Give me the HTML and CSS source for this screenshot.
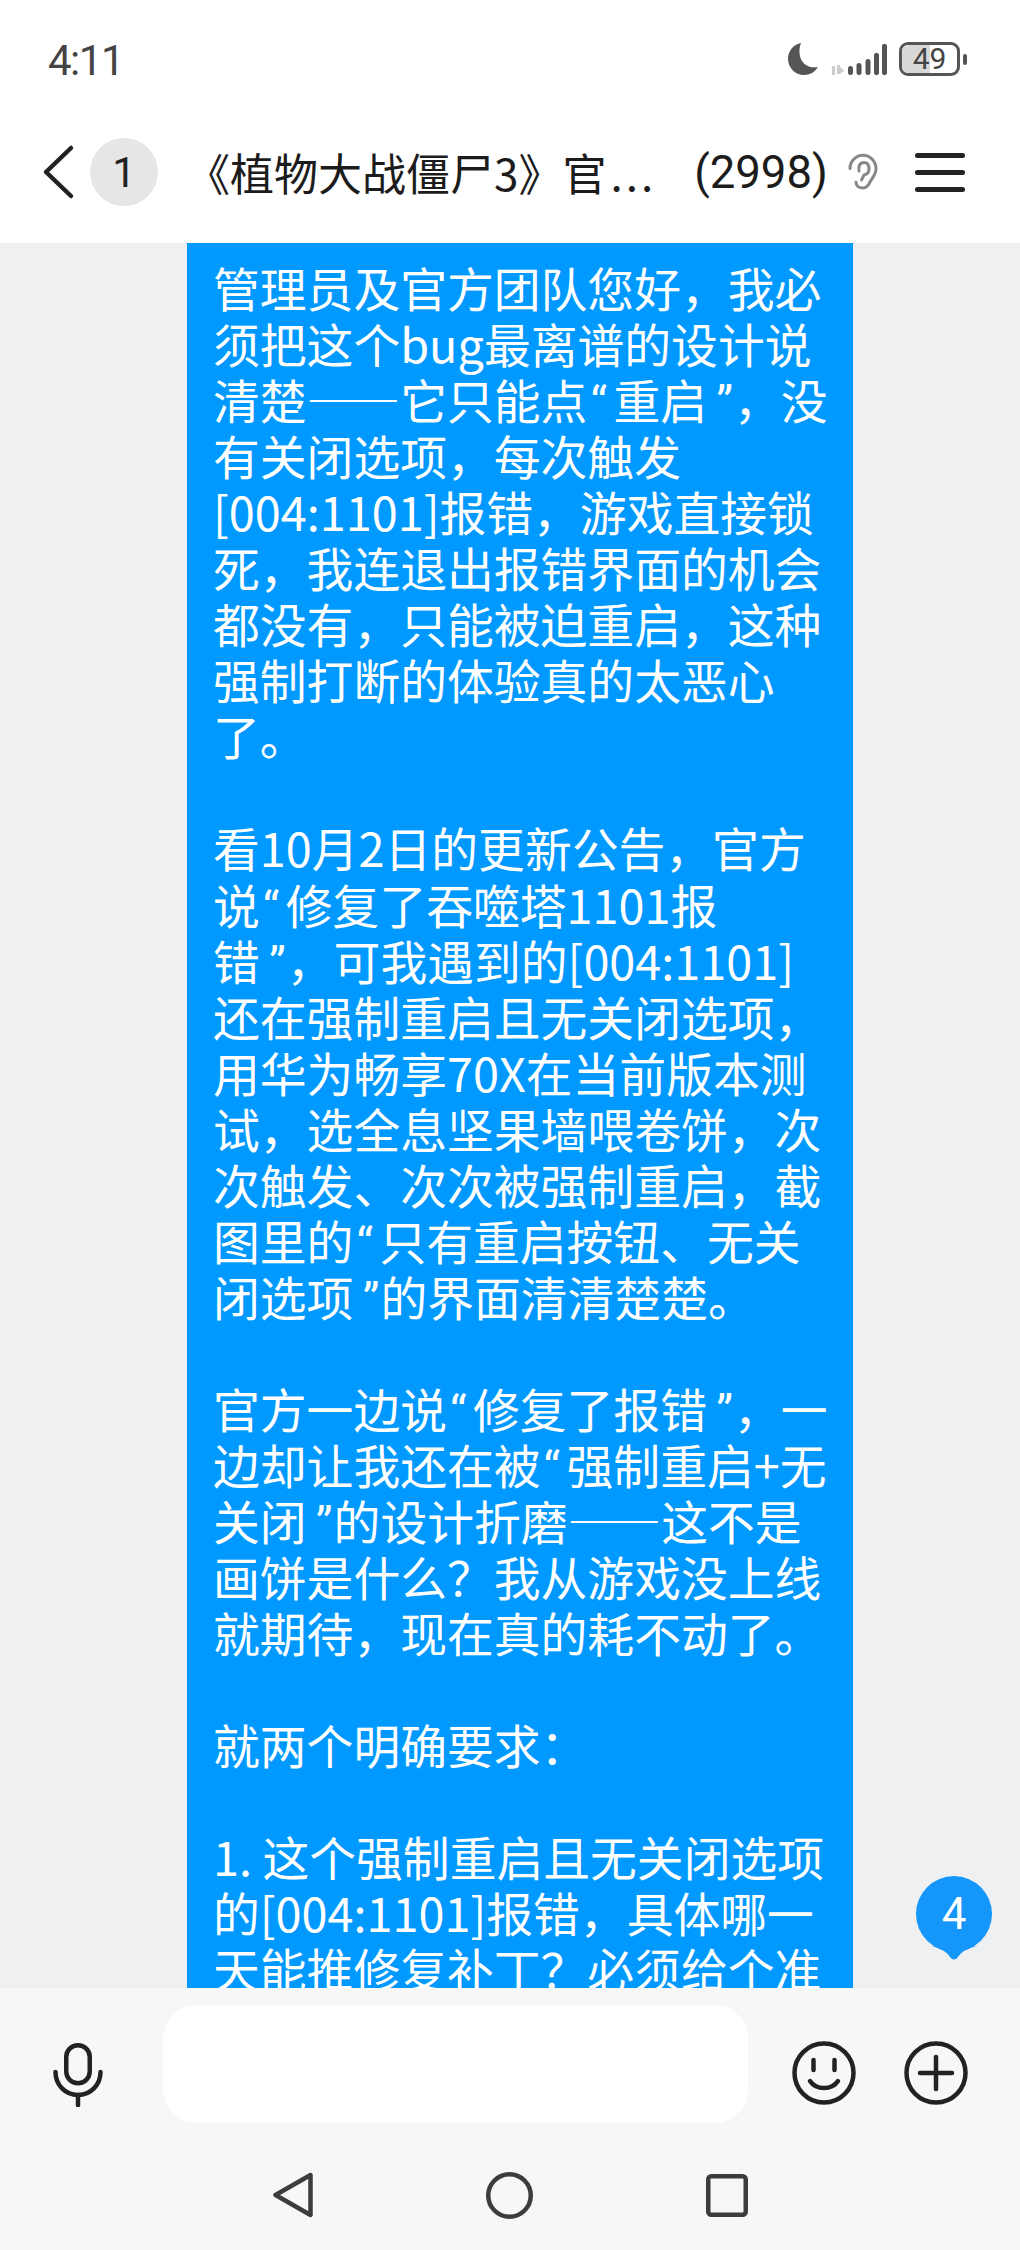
FILE: index.html
```html
<!DOCTYPE html>
<html lang="zh-CN">
<head>
<meta charset="utf-8">
<title>Chat</title>
<link rel="stylesheet" href="styles.css">
</head>
<body>
<div class="phone">
  <div class="status">
    <span class="time">4:11</span>
    <div class="status-icons">
      <svg class="moon" width="30" height="32" viewBox="0 0 30 32"><path d="M13 0C5.500 1.500 0 8 0 15.500 0 24.500 7 32 16 32c6 0 11-3 14-8-9 1.500-15-2.500-17.500-9C11 10 11 4.500 13 0z" fill="#555"/></svg>
      <svg class="signal" width="56" height="31" viewBox="0 0 56 31">
        <g fill="#ccc"><rect x="1" y="22" width="3" height="9"/><path d="M0 25l2.500-3 2.500 3z"/><rect x="6" y="21" width="3" height="9"/><path d="M9 23l4 3.500-4 3.500z"/></g>
        <g fill="#555"><rect x="17" y="22" width="5" height="9" rx="2.500"/><rect x="25.500" y="19" width="5" height="12" rx="2.500"/><rect x="34.500" y="15" width="5" height="16" rx="2.500"/><rect x="43" y="9" width="5" height="22" rx="2"/><rect x="51" y="0" width="5" height="31" rx="2"/></g>
      </svg>
      <div class="battery"><span class="battery-fill"></span><span class="battery-num">49</span></div>
      <span class="battery-tip"></span>
    </div>
  </div>
  <header class="topbar">
    <svg class="back" width="34" height="56" viewBox="0 0 34 56"><path d="M30 4 5 28l25 24" fill="none" stroke="#222" stroke-width="4.500" stroke-linecap="round" stroke-linejoin="round"/></svg>
    <span class="unread">1</span>
    <span class="title">《植物大战僵尸3》官<span class="dots">...</span></span>
    <span class="count">(2998)</span>
    <svg class="ear" width="30" height="38" viewBox="0 0 30 38"><g fill="none" stroke="#888" stroke-width="3" stroke-linecap="round"><path d="M2 15.500C2 8 8 2.300 15 2.300S28 8 28 16c0 5-3 8-5.500 12-1.500 3-3 7-7.500 7-4 0-7-2-7-6"/><path d="M11 18c-1-5 1-8.500 5-8.500s5 3 5 6.500-2 5.500-5 6l-2.500 5"/></g></svg>
    <span class="menu"><i></i><i></i><i></i></span>
  </header>
  <main class="messages">
    <div class="bubble">管理员及官方团队您好，我必<br>须把这个bug最离谱的设计说<br>清楚——它只能点<span class="ql">“</span>重启<span class="qr">”</span>，没<br>有关闭选项，每次触发<br>[004:1101]报错，游戏直接锁<br>死，我连退出报错界面的机会<br>都没有，只能被迫重启，这种<br>强制打断的体验真的太恶心<br>了。<br><br>看10月2日的更新公告，官方<br>说<span class="ql">“</span>修复了吞噬塔1101报<br>错<span class="qr">”</span>，可我遇到的[004:1101]<br>还在强制重启且无关闭选项，<br>用华为畅享70X在当前版本测<br>试，选全息坚果墙喂卷饼，次<br>次触发、次次被强制重启，截<br>图里的<span class="ql">“</span>只有重启按钮、无关<br>闭选项<span class="qr">”</span>的界面清清楚楚。<br><br>官方一边说<span class="ql">“</span>修复了报错<span class="qr">”</span>，一<br>边却让我还在被<span class="ql">“</span>强制重启+无<br>关闭<span class="qr">”</span>的设计折磨——这不是<br>画饼是什么？我从游戏没上线<br>就期待，现在真的耗不动了。<br><br>就两个明确要求：<br><br>1. 这个强制重启且无关闭选项<br>的[004:1101]报错，具体哪一<br>天能推修复补丁？必须给个准</div>
    <div class="jump"><span>4</span><svg class="jump-tail" width="44" height="14" viewBox="0 0 44 14"><path d="M0 0Q14 4 18 11Q22 16 26 11Q30 4 44 0z" fill="#1496fa"/></svg></div>
  </main>
  <footer class="bottom">
    <div class="inputrow">
      <svg class="mic" width="50" height="64" viewBox="0 0 50 64"><g fill="none" stroke="#222" stroke-width="4.500" stroke-linecap="round"><rect x="13.250" y="2.250" width="23.500" height="38" rx="11.750"/><path d="M2.500 29c0 13 10 23 22.500 23s22.500-10 22.500-23"/><path d="M25 52v10"/></g></svg>
      <div class="input"></div>
      <svg class="emoji" width="64" height="64" viewBox="0 0 64 64"><g fill="none" stroke="#222" stroke-width="4.500" stroke-linecap="round"><circle cx="32" cy="32" r="29.500"/><path d="M18 40c3 4.500 8 7 14 7s11-2.500 14-7"/><path d="M21.500 19v10M42.500 19v10"/></g></svg>
      <svg class="plus" width="64" height="64" viewBox="0 0 64 64"><g fill="none" stroke="#222" stroke-width="4.500" stroke-linecap="round"><circle cx="32" cy="32" r="29.500"/><path d="M32 16v32M16 32h32"/></g></svg>
    </div>
    <nav class="navbar">
      <svg width="40" height="46" viewBox="0 0 40 46"><path d="M37.500 3 2.500 23l35 20z" fill="none" stroke="#3c3c3c" stroke-width="4.500" stroke-linejoin="round"/></svg>
      <svg width="47" height="47" viewBox="0 0 47 47"><circle cx="23.500" cy="23.500" r="21.250" fill="none" stroke="#3c3c3c" stroke-width="4.500"/></svg>
      <svg width="42" height="43" viewBox="0 0 42 43"><rect x="2.250" y="2.250" width="37.500" height="38.500" rx="3" fill="none" stroke="#3c3c3c" stroke-width="4.500"/></svg>
    </nav>
  </footer>
</div>
</body>
</html>
```
FILE: styles.css
```css
* { box-sizing: border-box; }
html, body { margin: 0; padding: 0; }
body { font-family: "Noto Sans CJK SC", "Noto Sans", sans-serif; background: #eff0f2; }
.phone { width: 1020px; height: 2250px; display: flex; flex-direction: column; overflow: hidden; position: relative; }

.status { height: 120px; background: #fff; display: flex; align-items: center; justify-content: space-between; padding: 0 53px 2px 48px; flex: none; }
.time { font-family: Roboto, sans-serif; font-size: 42px; color: #444; letter-spacing: -1.500px; margin-top: 2px; }
.status-icons { display: flex; align-items: center; }
.moon { margin-right: 13px; }
.signal { margin-right: 12px; }
.battery { width: 61px; height: 34px; border: 3px solid #555; border-radius: 9px; position: relative; overflow: hidden; display: flex; align-items: center; justify-content: center; }
.battery-fill { position: absolute; left: 0; top: 0; bottom: 0; width: 50%; background: #d8d8d8; }
.battery-num { position: relative; font-family: Roboto, sans-serif; font-size: 30px; color: #444; line-height: 1; }
.battery-tip { width: 4px; height: 11px; background: #555; border-radius: 2px; margin-left: 3px; }

.topbar { height: 123px; background: #fff; display: flex; align-items: center; flex: none; padding-left: 41px; padding-bottom: 19px; }
.back { flex: none; }
.unread { width: 68px; height: 68px; border-radius: 50%; background: #e6e6e6; display: flex; align-items: center; justify-content: center; font-family: Roboto, sans-serif; font-size: 42px; color: #222; margin-left: 15px; flex: none; }
.title { font-size: 44px; color: #1c1c1c; margin-left: 28px; white-space: nowrap; }
.dots { letter-spacing: 3px; margin-left: 4px; }
.count { font-family: Roboto, sans-serif; font-size: 45.500px; color: #1c1c1c; margin-left: 38px; white-space: nowrap; }
.ear { margin-left: 20px; flex: none; }
.menu { display: flex; flex-direction: column; gap: 12px; margin-left: 37px; flex: none; }
.menu i { display: block; width: 50px; height: 5px; border-radius: 3px; background: #222; }

.messages { flex: 1; min-height: 0; overflow: hidden; position: relative; background: #eff0f2; }
.bubble { width: 666px; margin-left: 187px; height: 100%; overflow: hidden; background: #0099ff; color: #fff; font-size: 46.800px; line-height: 56.050px; padding: 16px 0 0 26px; white-space: nowrap; }
.ql, .qr { display: inline-block; font-family: Roboto, sans-serif; line-height: 0; }
.ql { width: 26px; text-align: left; padding-left: 3px; }
.qr { width: 27px; text-align: right; padding-right: 1px; }
.jump { position: absolute; left: 916px; top: 1633px; width: 76px; height: 76px; }
.jump span { display: flex; width: 76px; height: 76px; border-radius: 50%; background: #1496fa; color: #fff; align-items: center; justify-content: center; font-family: Roboto, sans-serif; font-size: 44px; }
.jump-tail { position: absolute; left: 16px; top: 70px; }

.bottom { height: 262px; flex: none; background: #f7f7f7; }
.inputrow { height: 152px; display: flex; align-items: flex-start; padding-left: 53px; }
.input { width: 585px; height: 118px; background: #fff; border-radius: 34px; margin: 17px 0 0 60px; flex: none; }
.mic { flex: none; margin-top: 55px; }
.emoji { margin: 53px 0 0 44px; flex: none; }
.plus { margin: 53px 0 0 48px; flex: none; }
.navbar { display: flex; align-items: center; height: 110px; padding-left: 273px; gap: 173px; }
```
